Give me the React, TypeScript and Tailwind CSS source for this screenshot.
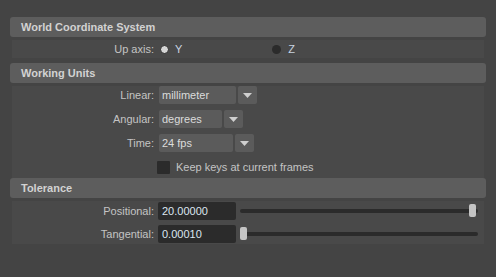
const font = "font-['Liberation_Sans',Arial,sans-serif]";

function Header({ title }: { title: string }) {
  return (
    <div className="flex h-[20px] w-[476px] items-center rounded-[3px] bg-[#5d5d5d] px-[11px] text-[11px] font-bold text-[#d2d2d2]">
      {title}
    </div>
  );
}

function Label({ text }: { text: string }) {
  return <div className="w-[143px] shrink-0 pr-px text-right text-[11px] text-[#c4c4c4]">{text}</div>;
}

function Arrow() {
  return (
    <svg width="9" height="5" viewBox="0 0 9 5" aria-hidden>
      <path d="M0 0h9L4.5 5z" fill="#cfcfcf" />
    </svg>
  );
}

function Dropdown({ value, width }: { value: string; width: number }) {
  return (
    <div className="ml-[4px] flex h-[18px] items-center gap-[2px]">
      <div
        className="flex h-full items-center rounded-[2px] bg-[#5b5b5b] px-[3px] text-[11px] text-[#dcdcdc]"
        style={{ width }}
      >
        {value}
      </div>
      <div className="flex h-full w-[19px] items-center justify-center rounded-[2px] bg-[#5b5b5b]">
        <Arrow />
      </div>
    </div>
  );
}

function Slider({ value }: { value: number }) {
  return (
    <div className="relative ml-[4px] flex h-[18px] w-[238px] items-center">
      <div className="h-[4px] w-full rounded-full bg-[#2b2b2b]" />
      <div
        className="absolute top-[2px] h-[13px] w-[7px] rounded-[2px] bg-[#c4c4c4]"
        style={{ left: `${value * 229}px` }}
      />
    </div>
  );
}

function NumField({ value, label }: { value: string; label: string }) {
  return (
    <div className="flex h-[18px] items-center">
      <Label text={label} />
      <div className="ml-[3px] flex h-full w-[78px] items-center rounded-[2px] bg-[#2b2b2b] px-[4px] text-[11px] text-[#dbe6f0]">
        {value}
      </div>
      <Slider value={label === "Positional:" ? 1 : 0} />
    </div>
  );
}

export default function App() {
  return (
    <div className={`${font} h-[277px] w-[496px] overflow-hidden bg-[#444444] pl-[10px] pt-[17px]`}>
      <Header title="World Coordinate System" />
      <div className="ml-[2px] mt-[3px] flex h-[18px] w-[472px] items-center bg-[#494949]">
        <Label text="Up axis:" />
        <div className="ml-[5px] h-[9px] w-[9px] rounded-full border border-[#2a2a2a] bg-[#d6d6d6]" />
        <span className="ml-[6px] text-[11px] text-[#c8d4e0]">Y</span>
        <div className="ml-[90px] h-[9px] w-[9px] rounded-full bg-[#2b2b2b]" />
        <span className="ml-[7px] text-[11px] text-[#c8d4e0]">Z</span>
      </div>

      <div className="mt-[5px]">
        <Header title="Working Units" />
      </div>
      <div className="ml-[2px] mt-[3px] flex w-[472px] flex-col gap-[6px] bg-[#494949] pb-[2px]">
        <div className="flex h-[18px] items-center">
          <Label text="Linear:" />
          <Dropdown value="millimeter" width={77} />
        </div>
        <div className="flex h-[18px] items-center">
          <Label text="Angular:" />
          <Dropdown value="degrees" width={63} />
        </div>
        <div className="flex h-[18px] items-center">
          <Label text="Time:" />
          <Dropdown value="24 fps" width={74} />
        </div>
        <div className="flex h-[18px] items-center">
          <div className="w-[145px] shrink-0" />
          <div className="h-[13px] w-[13px] rounded-[1px] bg-[#2b2b2b]" />
          <span className="ml-[6px] text-[11px] text-[#c4c4c4]">Keep keys at current frames</span>
        </div>
      </div>

      <Header title="Tolerance" />
      <div className="ml-[2px] mt-[3px] flex w-[472px] flex-col gap-[5px] bg-[#494949] py-[1px]">
        <NumField label="Positional:" value="20.00000" />
        <NumField label="Tangential:" value="0.00010" />
      </div>
    </div>
  );
}
